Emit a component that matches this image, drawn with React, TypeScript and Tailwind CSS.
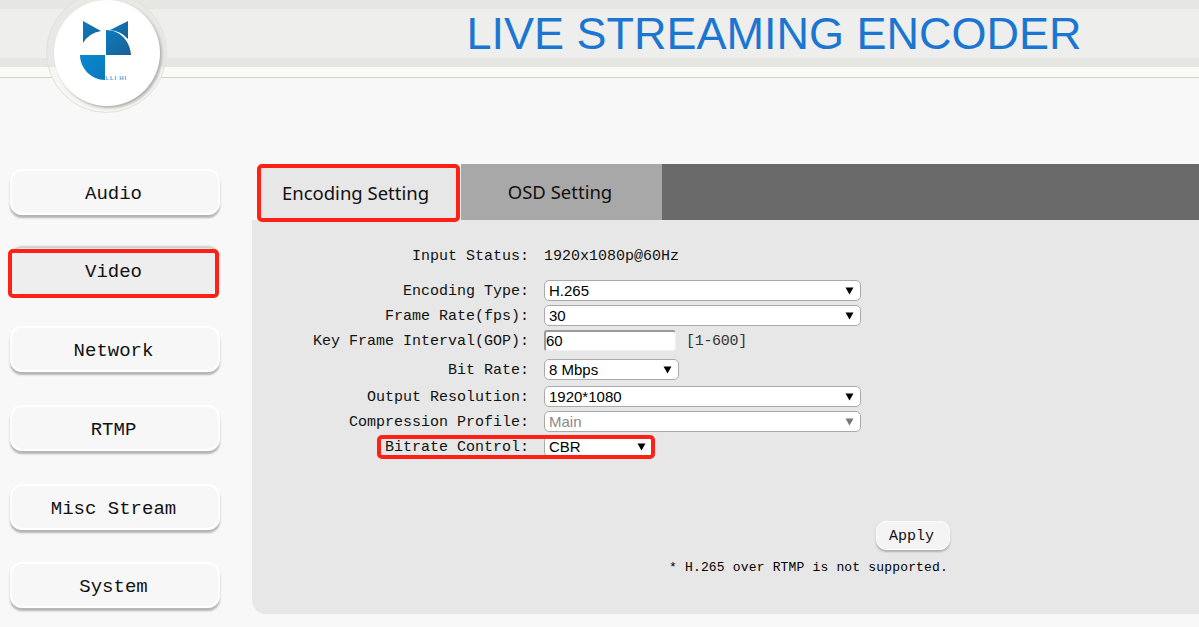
const mono = "font-['Liberation_Mono',monospace]";

function Arrow({ muted }: { muted?: boolean }) {
  return (
    <svg width="9" height="8" viewBox="0 0 9 8" className="shrink-0">
      <path d="M0.5 0.5 H8.5 L4.5 7.5 Z" fill={muted ? "#777" : "#000"} />
    </svg>
  );
}

function Select({ value, w, muted }: { value: string; w: string; muted?: boolean }) {
  return (
    <div
      className={`${w} h-[21px] bg-white border border-[#aaaaaa] rounded-[5px] flex items-center justify-between pl-1 pr-[6px] font-['Liberation_Sans',sans-serif] text-[15px] leading-none ${muted ? "text-[#888888]" : "text-black"}`}
    >
      <span>{value}</span>
      <Arrow muted={muted} />
    </div>
  );
}

function Row({ label, mb, children }: { label: string; mb: string; children: React.ReactNode }) {
  return (
    <div className={`flex items-center h-[21px] ${mb}`}>
      <div className={`w-[277px] text-right text-[15px] pt-[3px] text-[#111] whitespace-pre ${mono}`}>{label}</div>
      <div className="ml-[15px] flex items-center">{children}</div>
    </div>
  );
}

function NavButton({ label, active }: { label: string; active?: boolean }) {
  return (
    <div
      className={`relative w-[210px] h-[46px] rounded-[12px] flex items-center justify-center pt-[4px] pr-[3px] text-[19px] text-[#111] border-2 ${mono} ${
        active
          ? "bg-[#eeeeee] border-[#eeeeee] shadow-[0_-2px_2px_#cccccc]"
          : "bg-[#f7f7f7] border-white shadow-[0_3px_2px_#b5b5b5]"
      }`}
    >
      {label}
      {active && (
        <div className="absolute -left-[4px] -top-[1px] w-[211px] h-[49px] border-4 border-[#ff2016] rounded-[5px]" />
      )}
    </div>
  );
}

function Logo() {
  return (
    <div className="absolute left-[46px] -top-[8px] w-[121px] h-[121px] rounded-full bg-[linear-gradient(180deg,#e8e8e4_62%,#f6f6f2_62%)] border border-[#e2e2dc] flex items-center justify-center">
      <div className="relative w-[106px] h-[106px] rounded-full bg-white shadow-[2px_2px_3px_#b0b0b0]">
        <svg width="106" height="106" viewBox="0 0 106 106" className="absolute left-0 top-0">
          <defs>
            <linearGradient id="lg1" x1="0" y1="0" x2="1" y2="1">
              <stop offset="0" stopColor="#0a7cc2" />
              <stop offset="1" stopColor="#1c5f92" />
            </linearGradient>
            <linearGradient id="lg2" x1="0" y1="0" x2="1" y2="1">
              <stop offset="0" stopColor="#0a88d0" />
              <stop offset="1" stopColor="#0a78bc" />
            </linearGradient>
          </defs>
          <path d="M29 21 L47 31 Q35 33 29 43 Z" fill="url(#lg1)" />
          <path d="M56 30 L74 21 L74 39 Q67 31 56 30 Z" fill="url(#lg1)" />
          <path d="M52 30 C66 30 76 41 77 55 L52 55 Z" fill="url(#lg1)" />
          <path d="M26 55 L51 55 L51 80 C37 80 26 68 26 55 Z" fill="url(#lg2)" />
        </svg>
        <span className="absolute left-[52px] top-[74px] text-[6px] leading-[9px] text-[#4a9fd8] font-['Liberation_Sans',sans-serif] font-bold tracking-[0.8px] whitespace-pre">
          LLI HI
        </span>
      </div>
    </div>
  );
}

export default function App() {
  return (
    <div className="w-[1199px] h-[627px] overflow-hidden bg-[#f8f8f8] flex flex-col">
      <header className="relative h-[78px] shrink-0 flex flex-col">
        <div className="h-[9px] bg-[#e6e6e2]" />
        <div className="h-[49px] bg-[#eeeeec]" />
        <div className="h-[9px] bg-[#e6e6e2]" />
        <div className="h-[11px] bg-[#fafaf6] border-b border-[#d2d2ca]" />
        <Logo />
        <div className="absolute left-[349px] right-0 top-[9px] h-[49px] flex items-center justify-center font-['Liberation_Sans',sans-serif] text-[45px] leading-none text-[#1b76d2]">
          LIVE STREAMING ENCODER
        </div>
      </header>

      <main className="flex flex-1 min-h-0">
        <nav className="w-[252px] shrink-0 pl-[10px] pt-[91px] flex flex-col gap-[32.7px]">
          <NavButton label="Audio" />
          <NavButton label="Video" active />
          <NavButton label="Network" />
          <NavButton label="RTMP" />
          <NavButton label="Misc Stream" />
          <NavButton label="System" />
        </nav>

        <section className="flex-1 mt-[86px] mb-[13px] flex flex-col rounded-bl-[14px] overflow-hidden">
          <div className="flex h-[56px] shrink-0 bg-[#696969] text-[18.5px] text-[#111] font-['Noto_Sans',sans-serif]">
            <div className="relative z-10 w-[209px] bg-[#f8f8f8] pl-[5px]">
              <div className="w-[203px] h-[58px] bg-[#e7e7e7] border-4 border-[#ff2016] rounded-[5px] flex items-center justify-center pr-[6px]">
                Encoding Setting
              </div>
            </div>
            <div className="w-[201px] bg-[#a8a8a8] flex items-center justify-center pr-[3px]">OSD Setting</div>
          </div>

          <div className="relative flex-1 bg-[#e7e7e7] pt-[25px]">
            <Row label="Input Status:" mb="mb-[14px]">
              <span className={`text-[15px] pt-[3px] text-[#111] ${mono}`}>1920x1080p@60Hz</span>
            </Row>
            <Row label="Encoding Type:" mb="mb-1">
              <Select value="H.265" w="w-[317px]" />
            </Row>
            <Row label="Frame Rate(fps):" mb="mb-1">
              <Select value="30" w="w-[317px]" />
            </Row>
            <Row label="Key Frame Interval(GOP):" mb="mb-2">
              <div className="w-[132px] h-[21px] bg-white rounded-[3px] border-t-2 border-l-2 border-[#9a9a9a] border-r border-b border-r-[#f0f0f0] border-b-[#f0f0f0] font-['Liberation_Sans',sans-serif] text-[15px] leading-[18px] text-black">
                60
              </div>
              <span className={`ml-[10px] pt-[3px] text-[15px] text-[#333] tracking-[-0.3px] ${mono}`}>[1-600]</span>
            </Row>
            <Row label="Bit Rate:" mb="mb-[6px]">
              <Select value="8 Mbps" w="w-[135px]" />
            </Row>
            <Row label="Output Resolution:" mb="mb-1">
              <Select value="1920*1080" w="w-[317px]" />
            </Row>
            <Row label="Compression Profile:" mb="mb-1">
              <Select value="Main" w="w-[317px]" muted />
            </Row>
            <div className="relative flex items-center h-[21px]">
              <div className={`w-[277px] pt-[3px] text-right text-[15px] text-[#111] ${mono}`}>Bitrate Control:</div>
              <div className="ml-[15px]">
                <Select value="CBR" w="w-[109px]" />
              </div>
              <div className="absolute left-[125px] top-[-1px] w-[278px] h-[24px] border-4 border-[#ff2016] rounded-[5px]" />
            </div>

            <div className="flex justify-end pr-[249px] mt-[64px]">
              <div className={`w-[74px] h-[29px] rounded-[10px] bg-[#f4f4f4] border border-white shadow-[0_2px_2px_#b0b0b0] flex items-center justify-center pt-[4px] pr-[3px] text-[15px] text-[#111] ${mono}`}>
                Apply
              </div>
            </div>
            <div className={`flex justify-end pr-[251px] mt-[8px] text-[13px] tracking-[0.17px] text-black whitespace-pre ${mono}`}>
              * H.265 over RTMP is not supported.
            </div>
          </div>
        </section>
      </main>
    </div>
  );
}
